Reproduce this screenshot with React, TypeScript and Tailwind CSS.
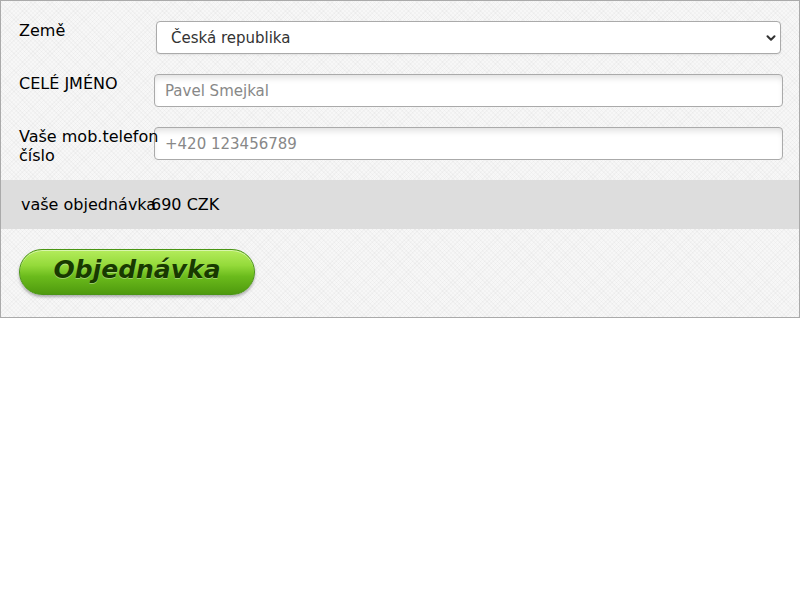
import { ChevronDown } from "lucide-react";

const font = { fontFamily: '"DejaVu Sans", sans-serif' };

function FieldRow({ label, children }: { label: string; children: React.ReactNode }) {
  return (
    <div className="flex items-start">
      <div className="relative z-10 w-[135px] h-[33px] shrink-0 overflow-visible">
        <label className="block w-[145px] text-[16px] leading-[19px] text-black">{label}</label>
      </div>
      <div className="flex-1 min-w-0">{children}</div>
    </div>
  );
}

export default function App() {
  return (
    <div className="w-[800px] h-[600px] bg-white" style={font}>
      <div className="border border-[#aaaaaa] bg-[#f7f7f7] bg-[repeating-linear-gradient(45deg,rgba(0,0,0,0.025)_0px,rgba(0,0,0,0.025)_1px,transparent_1px,transparent_3px),repeating-linear-gradient(-45deg,rgba(0,0,0,0.025)_0px,rgba(0,0,0,0.025)_1px,transparent_1px,transparent_3px)]">
        <div className="flex flex-col gap-5 pt-5 pl-[18px] pr-4">
          <FieldRow label="Země">
            <div className="relative ml-[2px] mr-[2px]">
              <select
                defaultValue="cz"
                className="w-full h-[33px] appearance-none rounded-[4px] border border-[#aaaaaa] bg-white pl-[14px] pt-[2px] text-[15px] text-[#333333] shadow-[0_1px_2px_rgba(0,0,0,0.08)] outline-none"
                style={font}
              >
                <option value="cz">Česká republika</option>
              </select>
              <ChevronDown
                className="pointer-events-none absolute right-[3px] top-[10px] w-[14px] h-[14px] text-[#333333]"
                strokeWidth={3.5}
              />
            </div>
          </FieldRow>
          <FieldRow label="CELÉ JMÉNO">
            <input
              placeholder="Pavel Smejkal"
              className="w-full h-[33px] rounded-[4px] border border-[#aaaaaa] bg-white px-[10px] pt-[1px] text-[15px] text-[#333333] placeholder:text-[#888888] shadow-[inset_0_5px_6px_-2px_rgba(0,0,0,0.12)] outline-none"
              style={font}
            />
          </FieldRow>
          <FieldRow label="Vaše mob.telefon číslo">
            <input
              placeholder="+420 123456789"
              className="w-full h-[33px] rounded-[4px] border border-[#aaaaaa] bg-white px-[10px] pt-[1px] text-[15px] text-[#333333] placeholder:text-[#888888] shadow-[inset_0_5px_6px_-2px_rgba(0,0,0,0.12)] outline-none"
              style={font}
            />
          </FieldRow>
        </div>

        <div className="mt-5 h-[49px] bg-[#dddddd] flex items-center pl-5 text-[16px] text-black">
          <span className="w-[130px] whitespace-nowrap">vaše objednávka</span>
          <span>690 CZK</span>
        </div>

        <div className="pt-5 pb-[22px] pl-[18px]">
          <button
            type="button"
            className="w-[236px] h-[46px] pb-[4px] rounded-full border border-[#4a9514] bg-[linear-gradient(to_bottom,#b4ec5c_0%,#94da3a_35%,#6bbb1c_60%,#4f9a0e_100%)] shadow-[0_2px_3px_rgba(0,0,0,0.3),inset_0_1px_0_rgba(255,255,255,0.5)] text-[25px] font-bold italic text-[#183a00] [text-shadow:0_1px_0_rgba(255,255,255,0.35)]"
            style={font}
          >
            Objednávka
          </button>
        </div>
      </div>
    </div>
  );
}
